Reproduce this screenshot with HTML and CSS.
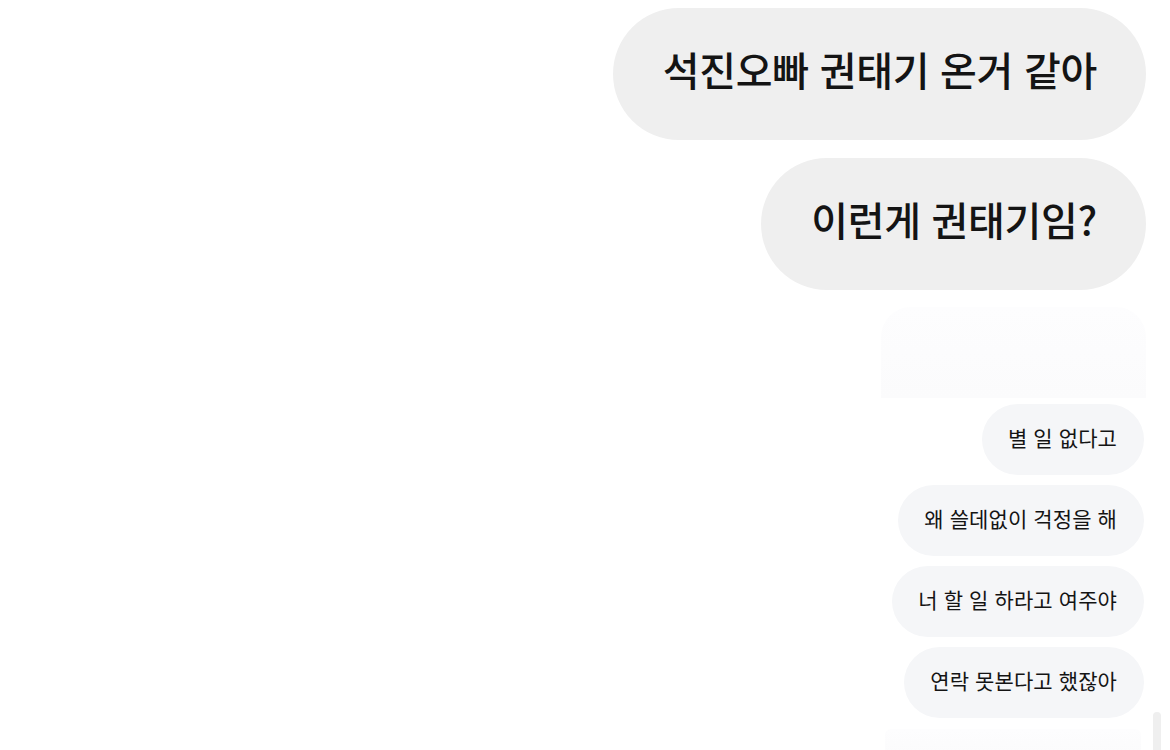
FILE: index.html
```html
<!DOCTYPE html>
<html lang="ko">
<head>
<meta charset="utf-8">
<link rel="stylesheet" href="styles.css">
</head>
<body>
<div class="chat">
  <div class="bubble big b1">석진오빠 권태기 온거 같아</div>
  <div class="bubble big b2">이런게 권태기임?</div>
  <div class="ghost ghost-top"></div>
  <div class="bubble small s1">별 일 없다고</div>
  <div class="bubble small s2">왜 쓸데없이 걱정을 해</div>
  <div class="bubble small s3">너 할 일 하라고 여주야</div>
  <div class="bubble small s4">연락 못본다고 했잖아</div>
  <div class="ghost ghost-bottom"></div>
</div>
<div class="scrollbar"></div>
</body>
</html>
```

FILE: styles.css
```css
html, body {
  margin: 0;
  padding: 0;
  background: #ffffff;
  width: 1170px;
  height: 750px;
  overflow: hidden;
  font-family: "Noto Sans CJK KR", "Noto Sans", sans-serif;
  color: #141414;
}

.chat {
  display: flex;
  flex-direction: column;
  align-items: flex-end;
  padding: 8px 24px 0 0;
}

.bubble {
  box-sizing: border-box;
  white-space: nowrap;
}

.big {
  height: 132px;
  line-height: 122px;
  padding: 0 49px 10px 50px;
  border-radius: 66px;
  background: #efefef;
  font-size: 40px;
  font-weight: 500;
  letter-spacing: -0.3px;
}

.b2 {
  margin-top: 18px;
}

.ghost {
  background: linear-gradient(#fdfdfe, #fbfbfc);
}

.ghost-top {
  margin-top: 17px;
  width: 265px;
  height: 91px;
  border-radius: 30px 30px 0 0;
}

.small {
  height: 71px;
  line-height: 66px;
  padding: 0 27px 5px 26px;
  border-radius: 36px;
  background: #f5f6f8;
  font-size: 21px;
  font-weight: 400;
  letter-spacing: 0.1px;
  margin-right: 2px;
}

.s1 { margin-top: 6px; }
.s2, .s3, .s4 { margin-top: 10px; }

.ghost-bottom {
  margin-top: 11px;
  margin-right: 5px;
  width: 256px;
  height: 30px;
  border-radius: 6px 6px 0 0;
}

.scrollbar {
  position: absolute;
  left: 1153px;
  top: 712px;
  width: 8px;
  height: 50px;
  border-radius: 4px;
  background: #efefef;
}
```
